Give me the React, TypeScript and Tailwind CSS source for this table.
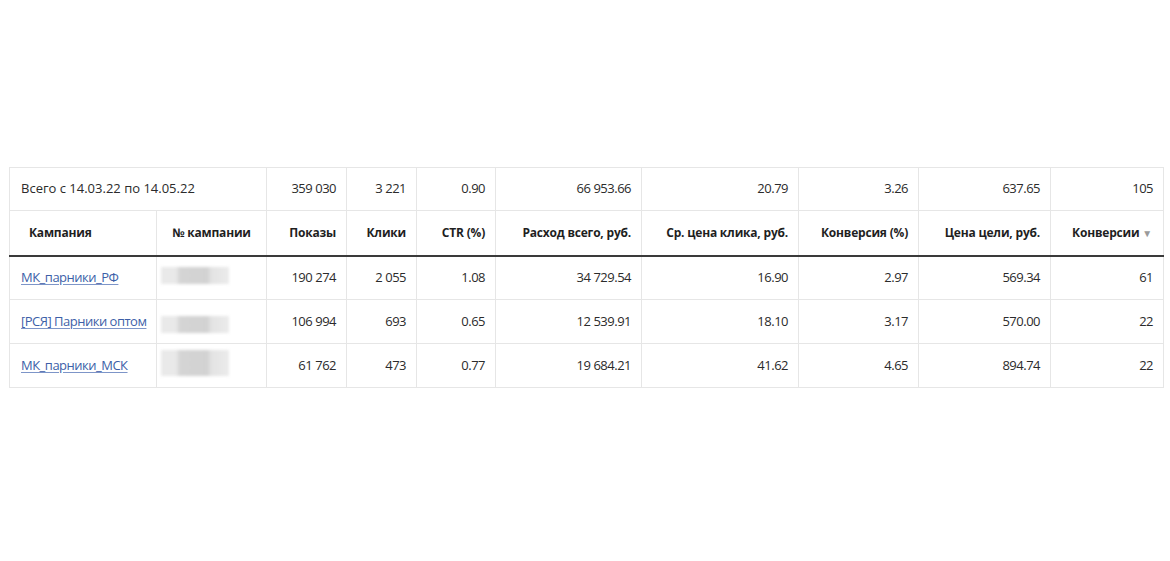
import React from "react";

const cols = [147, 110, 80, 70, 79, 146, 157, 120, 132, 113];

const rows = [
  { name: "МК_парники_РФ", v: ["190 274", "2 055", "1.08", "34 729.54", "16.90", "2.97", "569.34", "61"], blur: { mt: "mt-[10px]", h: "h-[17px]" } },
  { name: "[РСЯ] Парники оптом", v: ["106 994", "693", "0.65", "12 539.91", "18.10", "3.17", "570.00", "22"], blur: { mt: "mt-[16px]", h: "h-[17px]" } },
  { name: "МК_парники_МСК", v: ["61 762", "473", "0.77", "19 684.21", "41.62", "4.65", "894.74", "22"], blur: { mt: "mt-[6px]", h: "h-[26px]" } },
];

const totals = ["359 030", "3 221", "0.90", "66 953.66", "20.79", "3.26", "637.65", "105"];

function Num({ v }: { v: string }) {
  const parts = v.split(" ");
  return (
    <>
      {parts.map((p, i) => (
        <React.Fragment key={i}>
          {i > 0 && <span className="inline-block w-[3px]" />}
          {p}
        </React.Fragment>
      ))}
    </>
  );
}

function Blur({ mt, h }: { mt: string; h: string }) {
  return (
    <div
      className={`${mt} ${h} ml-[4px] w-[68px] blur-[1.5px]`}
      style={{
        background:
          "linear-gradient(to right, #e9e9e9 0%, #e9e9e9 22%, #d4d4d4 28%, #d2d2d2 68%, #e3e3e3 74%, #ebebeb 100%)",
      }}
    />
  );
}

const th = "border border-[#e6e6e6] border-b-2 border-b-[#3a3a3a] px-[10px] text-right font-bold";

export default function App() {
  const td = "border border-[#e6e6e6] px-[10px] text-right tracking-[-0.5px] whitespace-nowrap";
  return (
    <div className="min-h-[561px] w-[1170px] bg-white pt-[167px] pl-[9px] text-[13px] text-[#2b2b2b]" style={{ fontFamily: '"Open Sans", "Liberation Sans", sans-serif' }}>
      <table className="border-collapse table-fixed w-[1154px]">
        <colgroup>
          {cols.map((w, i) => (
            <col key={i} style={{ width: w }} />
          ))}
        </colgroup>
        <thead>
          <tr className="h-[43px]">
            <td colSpan={2} className="border border-[#e6e6e6] pl-[11px] text-left">Всего с 14.03.22 по 14.05.22</td>
            {totals.map((v, j) => (
              <td key={j} className={td}><Num v={v} /></td>
            ))}
          </tr>
          <tr className="h-[45px] text-[12px] text-[#1f1f1f] tracking-[-0.2px]">
            <th className="border border-[#e6e6e6] border-b-2 border-b-[#3a3a3a] pl-[19px] text-left font-bold">Кампания</th>
            <th className="border border-[#e6e6e6] border-b-2 border-b-[#3a3a3a] text-center font-bold">№ кампании</th>
            <th className={th}>Показы</th>
            <th className={th}>Клики</th>
            <th className={th}>CTR (%)</th>
            <th className={th}>Расход всего, руб.</th>
            <th className={th}>Ср. цена клика, руб.</th>
            <th className={th}>Конверсия (%)</th>
            <th className={th}>Цена цели, руб.</th>
            <th className="border border-[#e6e6e6] border-b-2 border-b-[#3a3a3a] pr-[11px] text-right font-bold">
              Конверсии <span className="text-[10px] text-[#9a9a9a] font-normal">▼</span>
            </th>
          </tr>
        </thead>
        <tbody>
          {rows.map((r, i) => (
            <tr key={i} className="h-[44px]">
              <td className="border border-[#e6e6e6] pl-[11px] text-left tracking-[-0.5px]">
                <a href="#" className="text-[#3d5fa8] underline decoration-[#7d95c8] underline-offset-2">{r.name}</a>
              </td>
              <td className="border border-[#e6e6e6] align-top">
                <Blur mt={r.blur.mt} h={r.blur.h} />
              </td>
              {r.v.map((v, j) => (
                <td key={j} className={td}><Num v={v} /></td>
              ))}
            </tr>
          ))}
        </tbody>
      </table>
    </div>
  );
}
